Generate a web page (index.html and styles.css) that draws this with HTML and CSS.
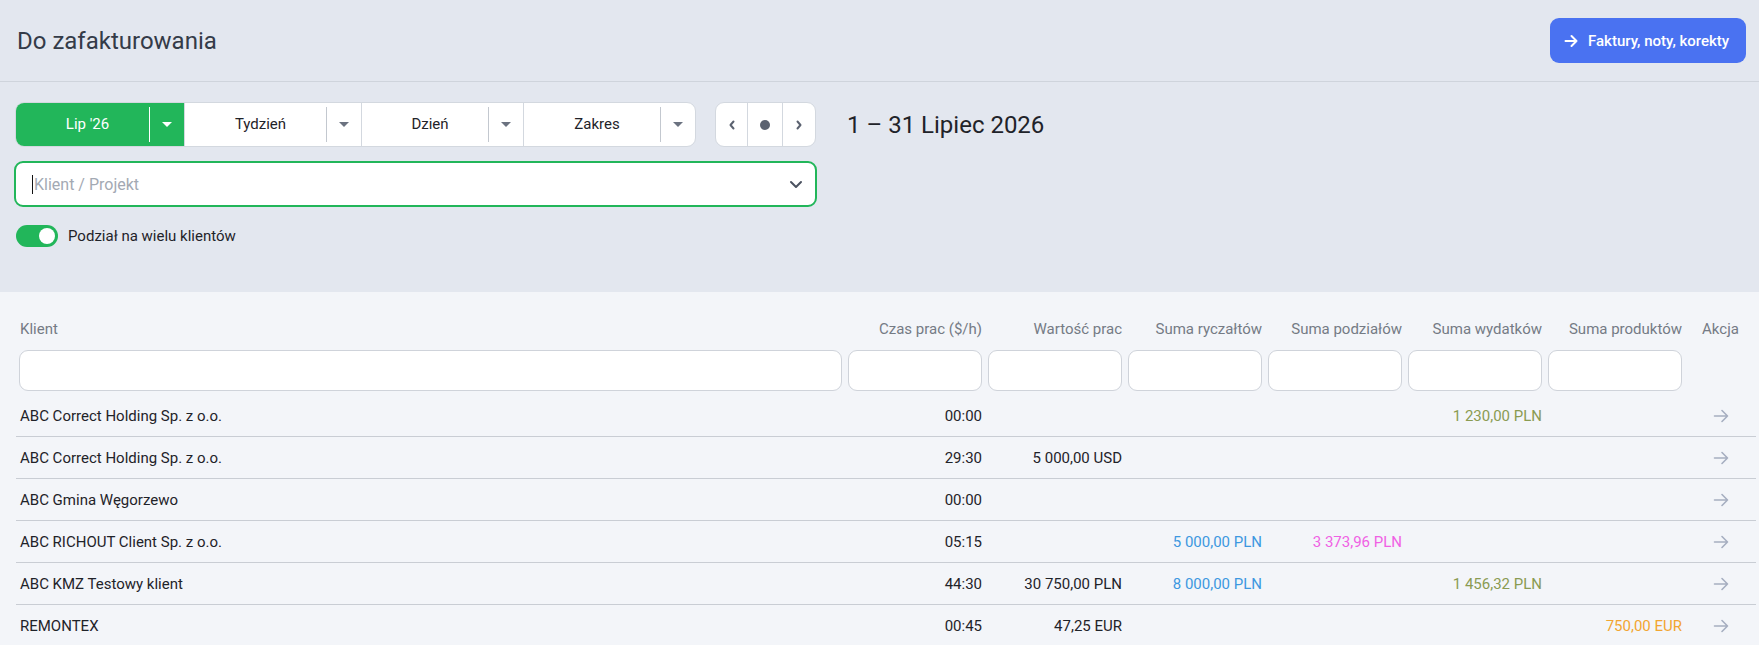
FILE: index.html
```html
<!DOCTYPE html>
<html lang="pl">
<head>
    <meta charset="UTF-8">
    <meta name="viewport" content="width=device-width, initial-scale=1.0">
    <title>Do zafakturowania</title>
    <link rel="stylesheet" href="styles.css">
</head>
<body>
    <header class="topbar">
        <h1 class="page-title">Do zafakturowania</h1>
        <a href="#" class="btn-primary">
            <svg width="14" height="14" viewBox="0 0 14 14" fill="none" stroke="#fff" stroke-width="2" stroke-linecap="round" stroke-linejoin="round"><path d="M1.5 7h11M7.5 2l5 5-5 5"/></svg>
            Faktury, noty, korekty
        </a>
    </header>

    <section class="filters">
        <div class="filter-row">
            <div class="seg-group">
                <div class="seg seg-active">
                    <span class="seg-label w1">Lip '26</span>
                    <span class="seg-caret"><i class="tri"></i></span>
                </div>
                <div class="seg">
                    <span class="seg-label w2">Tydzień</span>
                    <span class="seg-caret"><i class="tri"></i></span>
                </div>
                <div class="seg">
                    <span class="seg-label w3">Dzień</span>
                    <span class="seg-caret"><i class="tri"></i></span>
                </div>
                <div class="seg">
                    <span class="seg-label w4">Zakres</span>
                    <span class="seg-caret"><i class="tri"></i></span>
                </div>
            </div>
            <div class="nav-group">
                <span class="nav-btn n1"><svg width="8" height="12" viewBox="0 0 8 12" fill="none" stroke="#5b6270" stroke-width="2" stroke-linecap="round" stroke-linejoin="round"><path d="M5.5 2.5 2.5 6l3 3.5"/></svg></span>
                <span class="nav-btn n2"><i class="dot"></i></span>
                <span class="nav-btn n3"><svg width="8" height="12" viewBox="0 0 8 12" fill="none" stroke="#5b6270" stroke-width="2" stroke-linecap="round" stroke-linejoin="round"><path d="M2.5 2.5 5.5 6l-3 3.5"/></svg></span>
            </div>
            <div class="date-range">1 – 31 Lipiec 2026</div>
        </div>

        <div class="client-select">
            <span class="cursor"></span>
            <span class="placeholder">Klient / Projekt</span>
            <svg class="chevron" width="16" height="16" viewBox="0 0 16 16" fill="none" stroke="#4b5260" stroke-width="2" stroke-linecap="round" stroke-linejoin="round"><path d="M3 6l5 5 5-5"/></svg>
        </div>

        <label class="switch-row">
            <span class="switch"><span class="knob"></span></span>
            Podział na wielu klientów
        </label>
    </section>

    <section class="table-wrap">
        <table class="data">
            <colgroup>
                <col class="c-client">
                <col class="c-num"><col class="c-num"><col class="c-num">
                <col class="c-num"><col class="c-num"><col class="c-num">
                <col class="c-act">
            </colgroup>
            <thead>
                <tr class="head">
                    <th class="left">Klient</th>
                    <th>Czas prac ($/h)</th>
                    <th>Wartość prac</th>
                    <th>Suma ryczałtów</th>
                    <th>Suma podziałów</th>
                    <th>Suma wydatków</th>
                    <th>Suma produktów</th>
                    <th class="center">Akcja</th>
                </tr>
                <tr class="search">
                    <td><input type="text"></td>
                    <td><input type="text"></td>
                    <td><input type="text"></td>
                    <td><input type="text"></td>
                    <td><input type="text"></td>
                    <td><input type="text"></td>
                    <td><input type="text"></td>
                    <td></td>
                </tr>
            </thead>
            <tbody>
                <tr>
                    <td class="left">ABC Correct Holding Sp. z o.o.</td>
                    <td>00:00</td><td></td><td></td><td></td>
                    <td class="olive">1 230,00 PLN</td><td></td>
                    <td class="center"><svg class="go" width="16" height="14" viewBox="0 0 16 14" fill="none" stroke="#a6aec0" stroke-width="1.6" stroke-linecap="round" stroke-linejoin="round"><path d="M1.5 7h13M9 1.5 14.5 7 9 12.5"/></svg></td>
                </tr>
                <tr>
                    <td class="left">ABC Correct Holding Sp. z o.o.</td>
                    <td>29:30</td><td>5 000,00 USD</td><td></td><td></td><td></td><td></td>
                    <td class="center"><svg class="go" width="16" height="14" viewBox="0 0 16 14" fill="none" stroke="#a6aec0" stroke-width="1.6" stroke-linecap="round" stroke-linejoin="round"><path d="M1.5 7h13M9 1.5 14.5 7 9 12.5"/></svg></td>
                </tr>
                <tr>
                    <td class="left">ABC Gmina Węgorzewo</td>
                    <td>00:00</td><td></td><td></td><td></td><td></td><td></td>
                    <td class="center"><svg class="go" width="16" height="14" viewBox="0 0 16 14" fill="none" stroke="#a6aec0" stroke-width="1.6" stroke-linecap="round" stroke-linejoin="round"><path d="M1.5 7h13M9 1.5 14.5 7 9 12.5"/></svg></td>
                </tr>
                <tr>
                    <td class="left">ABC RICHOUT Client Sp. z o.o.</td>
                    <td>05:15</td><td></td>
                    <td class="blue">5 000,00 PLN</td>
                    <td class="pink">3 373,96 PLN</td><td></td><td></td>
                    <td class="center"><svg class="go" width="16" height="14" viewBox="0 0 16 14" fill="none" stroke="#a6aec0" stroke-width="1.6" stroke-linecap="round" stroke-linejoin="round"><path d="M1.5 7h13M9 1.5 14.5 7 9 12.5"/></svg></td>
                </tr>
                <tr>
                    <td class="left">ABC KMZ Testowy klient</td>
                    <td>44:30</td><td>30 750,00 PLN</td>
                    <td class="blue">8 000,00 PLN</td><td></td>
                    <td class="olive">1 456,32 PLN</td><td></td>
                    <td class="center"><svg class="go" width="16" height="14" viewBox="0 0 16 14" fill="none" stroke="#a6aec0" stroke-width="1.6" stroke-linecap="round" stroke-linejoin="round"><path d="M1.5 7h13M9 1.5 14.5 7 9 12.5"/></svg></td>
                </tr>
                <tr>
                    <td class="left">REMONTEX</td>
                    <td>00:45</td><td>47,25 EUR</td><td></td><td></td><td></td>
                    <td class="orange">750,00 EUR</td>
                    <td class="center"><svg class="go" width="16" height="14" viewBox="0 0 16 14" fill="none" stroke="#a6aec0" stroke-width="1.6" stroke-linecap="round" stroke-linejoin="round"><path d="M1.5 7h13M9 1.5 14.5 7 9 12.5"/></svg></td>
                </tr>
            </tbody>
        </table>
    </section>
</body>
</html>
```

FILE: styles.css
```css
body {
    margin: 0;
    font-family: Roboto, "Liberation Sans", sans-serif;
    color: #1f2329;
    background: #f3f5f9;
    overflow: hidden;
}

.topbar {
    display: flex;
    justify-content: space-between;
    align-items: center;
    height: 82px;
    padding: 0 13px 0 17px;
    background: #e3e7ef;
    border-bottom: 1px solid #cfd4dc;
    box-sizing: border-box;
}

.page-title {
    margin: 0;
    font-size: 24px;
    font-weight: 400;
    color: #343b48;
}

.btn-primary {
    display: flex;
    align-items: center;
    gap: 10px;
    width: 196px;
    height: 45px;
    padding: 0 14px;
    background: #4a72f1;
    color: #fff;
    border-radius: 9px;
    font-size: 15px;
    font-weight: 500;
    text-decoration: none;
    box-sizing: border-box;
    white-space: nowrap;
}

.filters {
    background: #e3e7ef;
    padding: 20px 14px 0 14px;
    height: 210px;
    box-sizing: border-box;
}

.filter-row {
    display: flex;
    align-items: center;
}

.seg-group {
    display: flex;
    height: 45px;
    margin-left: 1px;
    border: 1px solid #d3d8df;
    border-radius: 9px;
    background: #fff;
    overflow: hidden;
    box-sizing: border-box;
}

.seg {
    display: flex;
    align-items: center;
    font-size: 15px;
    color: #1f2329;
    border-left: 1px solid #d3d8df;
}

.seg:first-child {
    border-left: none;
}

.seg-active {
    background: #22b65a;
    color: #fff;
}

.seg-label {
    text-align: center;
    padding-left: 10px;
    border-right: 1px solid #c3c8cf;
    height: 35px;
    line-height: 35px;
    box-sizing: border-box;
}

.seg-active .seg-label {
    border-right-color: #fff;
}

.w1 { width: 134px; }
.w2 { width: 142px; }
.w3 { width: 127px; }
.w4 { width: 137px; }

.seg-caret {
    width: 34px;
    display: flex;
    justify-content: center;
}

.tri {
    width: 0;
    height: 0;
    border-left: 5px solid transparent;
    border-right: 5px solid transparent;
    border-top: 5px solid #6b7280;
}

.seg-active .tri {
    border-top-color: #fff;
}

.nav-group {
    display: flex;
    height: 45px;
    margin-left: 19px;
    border: 1px solid #d3d8df;
    border-radius: 9px;
    background: #fff;
    box-sizing: border-box;
}

.nav-btn {
    display: flex;
    justify-content: center;
    align-items: center;
    border-left: 1px solid #d3d8df;
}

.nav-btn:first-child {
    border-left: none;
}

.n1 { width: 31px; }
.n2 { width: 34px; }
.n3 { width: 32px; }

.dot {
    width: 10px;
    height: 10px;
    border-radius: 50%;
    background: #5b6270;
}

.date-range {
    margin-left: 31px;
    font-size: 24px;
    color: #1f2329;
}

.client-select {
    display: flex;
    align-items: center;
    width: 803px;
    height: 46px;
    margin-top: 14px;
    padding: 0 11px 0 16px;
    border: 2px solid #22b65a;
    border-radius: 9px;
    background: #fff;
    box-sizing: border-box;
}

.cursor {
    width: 1px;
    height: 19px;
    margin-right: 1px;
    background: #111;
}

.placeholder {
    flex: 1;
    font-size: 16px;
    color: #a3a9b3;
}

.switch-row {
    display: flex;
    align-items: center;
    gap: 10px;
    margin-top: 18px;
    margin-left: 2px;
    font-size: 15px;
    color: #1f2329;
}

.switch {
    width: 42px;
    height: 22px;
    border-radius: 11px;
    background: #22b65a;
    display: flex;
    align-items: center;
    justify-content: flex-end;
    padding: 0 3px;
    box-sizing: border-box;
}

.knob {
    width: 16px;
    height: 16px;
    border-radius: 50%;
    background: #fff;
}

.table-wrap {
    padding-left: 16px;
}

.data {
    width: 1740px;
    table-layout: fixed;
    border-collapse: collapse;
    font-size: 15px;
}

.c-client { width: 829px; }
.c-num { width: 140px; }
.c-act { width: 71px; }

.data th {
    font-weight: 400;
    color: #757b85;
    text-align: right;
    padding: 27px 3px 8px;
    line-height: 20px;
}

.data .left { text-align: left; padding-left: 4px; }
.data .center { text-align: center; }

.search td {
    padding: 3px 3px 4px;
}

.search input {
    display: block;
    width: 100%;
    height: 41px;
    border: 1px solid #cfd3da;
    border-radius: 9px;
    background: #fff;
    box-sizing: border-box;
}

tbody td {
    height: 41px;
    padding: 0 3px;
    text-align: right;
    white-space: nowrap;
    border-bottom: 1px solid #c9cdd4;
    color: #1f2329;
}

.olive { color: #8a9b52 !important; }
.blue { color: #3d98e0 !important; }
.pink { color: #f061e4 !important; }
.orange { color: #f2a531 !important; }

.go {
    display: block;
    margin: 0 auto;
}
```
